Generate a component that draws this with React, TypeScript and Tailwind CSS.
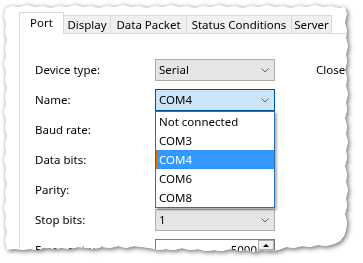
import React from "react";

function Chevron() {
  return (
    <svg width="8" height="5" viewBox="0 0 8 5" className="shrink-0">
      <path d="M0.5 0.5 L4 4 L7.5 0.5" stroke="#606060" strokeWidth="1" fill="none" />
    </svg>
  );
}

function Combo({ value, focused }: { value: string; focused?: boolean }) {
  return (
    <div
      className={
        focused
          ? "w-[120px] h-[22px] border border-[#005499] bg-[#cce4f7] flex items-center justify-between pl-[3px] pr-[5px]"
          : "w-[120px] h-[22px] border border-[#adadad] bg-[#e5e5e5] flex items-center justify-between pl-[3px] pr-[5px]"
      }
    >
      <span className="leading-none">{value}</span>
      <Chevron />
    </div>
  );
}

function Label({ children }: { children: React.ReactNode }) {
  return <div className="w-[120px] shrink-0 leading-none whitespace-nowrap">{children}</div>;
}

const items = ["Not connected", "COM3", "COM4", "COM6", "COM8"];

export default function App() {
  return (
    <div className="w-[363px] h-[263px] bg-white overflow-hidden relative font-['Noto_Sans',sans-serif] text-[11.5px] text-black">
      <div className="[filter:drop-shadow(0_0_2px_rgba(0,0,0,0.22))_drop-shadow(2px_2px_2px_rgba(0,0,0,0.4))]">
        <div className="h-[263px] bg-white pl-[19px] pt-[12px] flex flex-col [clip-path:polygon(6px_8px,12px_6px,19px_7px,27px_5px,35px_7px,43px_6px,51px_8px,59px_6px,67px_7px,75px_5px,83px_7px,91px_6px,99px_8px,107px_6px,115px_7px,123px_5px,131px_7px,139px_6px,147px_8px,155px_6px,163px_7px,171px_5px,179px_7px,187px_6px,195px_8px,203px_6px,211px_7px,219px_5px,227px_7px,235px_6px,243px_8px,251px_6px,259px_7px,267px_5px,275px_7px,283px_6px,291px_8px,299px_6px,307px_7px,315px_5px,323px_7px,331px_6px,339px_8px,345px_7px,347px_14px,345px_22px,347px_30px,346px_38px,348px_46px,346px_54px,347px_62px,345px_70px,347px_78px,346px_86px,348px_94px,346px_102px,347px_110px,345px_118px,347px_126px,346px_134px,348px_142px,346px_150px,347px_158px,345px_166px,347px_174px,346px_182px,348px_190px,346px_198px,347px_206px,345px_214px,347px_222px,346px_230px,344px_236px,340px_241px,334px_244px,326px_246px,318px_245px,310px_247px,302px_246px,294px_248px,286px_247px,278px_250px,270px_251px,262px_250px,254px_252px,246px_250px,238px_251px,230px_249px,222px_251px,214px_250px,206px_251px,198px_249px,190px_250px,182px_248px,174px_250px,166px_249px,158px_250px,150px_248px,142px_247px,134px_246px,126px_248px,118px_246px,110px_248px,102px_247px,94px_249px,86px_248px,78px_247px,70px_249px,62px_248px,54px_249px,46px_248px,38px_250px,30px_249px,22px_250px,14px_249px,7px_250px,5px_240px,7px_232px,5px_224px,6px_216px,4px_208px,6px_200px,5px_192px,7px_184px,5px_176px,6px_168px,4px_160px,6px_152px,5px_144px,7px_136px,5px_128px,6px_120px,4px_112px,6px_104px,5px_96px,7px_88px,5px_80px,6px_72px,4px_64px,6px_56px,5px_48px,7px_40px,5px_32px,6px_24px,4px_16px)]">
          {/* Tabs */}
          <div className="flex items-end h-[22px] relative z-10 -mb-px shrink-0">
            <div className="w-[45px] h-[22px] border border-b-0 border-[#d9d9d9] bg-white flex items-center justify-center pb-[1px]">
              Port
            </div>
            <div className="w-[47px] h-[18px] mb-px border-t border-r border-[#d9d9d9] bg-[#f0f0f0] flex items-center justify-center">
              Display
            </div>
            <div className="w-[76px] h-[18px] mb-px border-t border-r border-[#d9d9d9] bg-[#f0f0f0] flex items-center justify-center">
              Data Packet
            </div>
            <div className="w-[105px] h-[18px] mb-px border-t border-r border-[#d9d9d9] bg-[#f0f0f0] flex items-center justify-center whitespace-nowrap">
              Status Conditions
            </div>
            <div className="w-[40px] h-[18px] mb-px border-t border-r border-[#d9d9d9] bg-[#f0f0f0] flex items-center justify-center">
              Server
            </div>
          </div>
          {/* Panel */}
          <div className="flex-1 border-t border-l border-[#d9d9d9] bg-white pl-[15px] pt-[25px] flex flex-col gap-[8px]">
            <div className="flex items-center h-[22px]">
              <Label>Device type:</Label>
              <Combo value="Serial" />
              <div className="ml-[41px] whitespace-nowrap leading-none">Closed</div>
            </div>
            <div className="flex items-center h-[22px]">
              <Label>Name:</Label>
              <div className="relative">
                <Combo value="COM4" focused />
                <div className="absolute left-0 top-[22px] z-20 w-[120px] bg-white border border-[#2b6fb6] shadow-[2px_2px_2px_rgba(0,0,0,0.3)] flex flex-col">
                  {items.map((it) =>
                    it === "COM4" ? (
                      <div
                        key={it}
                        className="h-[19px] bg-[#3399ff] text-white border border-dotted border-[#cc6600] flex items-center pl-[2px] leading-none"
                      >
                        {it}
                      </div>
                    ) : (
                      <div key={it} className="h-[19px] flex items-center pl-[3px] leading-none">
                        {it}
                      </div>
                    )
                  )}
                </div>
              </div>
            </div>
            <div className="flex items-center h-[22px]">
              <Label>Baud rate:</Label>
              <Combo value="" />
            </div>
            <div className="flex items-center h-[22px]">
              <Label>Data bits:</Label>
              <Combo value="" />
            </div>
            <div className="flex items-center h-[22px]">
              <Label>Parity:</Label>
              <Combo value="" />
            </div>
            <div className="flex items-center h-[22px]">
              <Label>Stop bits:</Label>
              <Combo value="1" />
            </div>
            <div className="flex items-center h-[22px]">
              <Label>Erase output:</Label>
              <div className="w-[120px] h-[22px] border border-[#7a7a7a] bg-white flex items-stretch justify-end">
                <div className="flex items-center pr-[1px] leading-none">5000</div>
                <div className="w-[16px] flex flex-col">
                  <div className="h-[10px] border border-[#adadad] bg-[#f0f0f0] flex items-center justify-center">
                    <svg width="6" height="3" viewBox="0 0 6 3">
                      <path d="M0 3 L3 0 L6 3 Z" fill="#000" />
                    </svg>
                  </div>
                  <div className="h-[10px] border border-[#adadad] bg-[#f0f0f0]" />
                </div>
              </div>
              <div className="ml-[8px] leading-none">ms</div>
            </div>
          </div>
        </div>
      </div>
    </div>
  );
}
